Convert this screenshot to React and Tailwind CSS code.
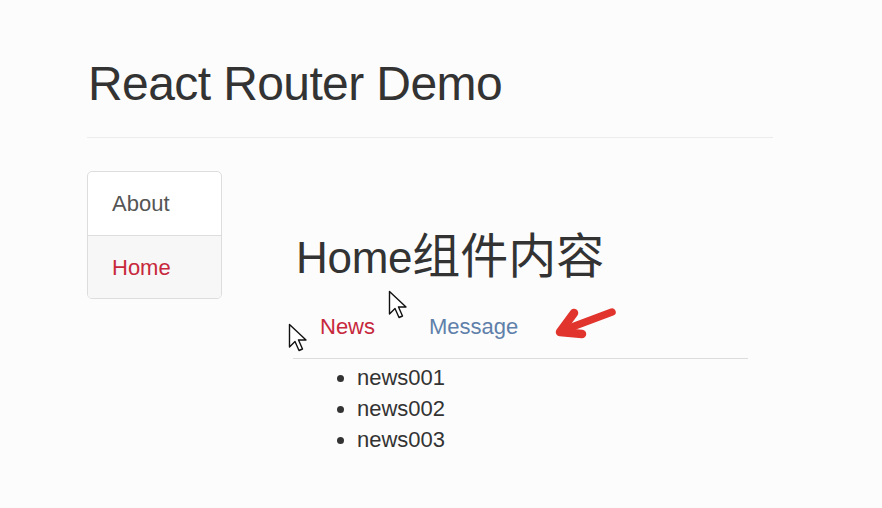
import React from "react";

function Cursor({ className }) {
  return (
    <svg className={className} width="20" height="30" viewBox="0 0 20 30" fill="none">
      <path
        d="M1.5 1.5 L1.5 24 L7 18.5 L11 27.5 L14.5 26 L10.5 17 L18 17 Z"
        fill="#ffffff"
        stroke="#111111"
        strokeWidth="1.4"
        strokeLinejoin="round"
      />
    </svg>
  );
}

function RedArrow({ className }) {
  return (
    <svg className={className} width="70" height="44" viewBox="0 0 70 44" fill="none">
      <path d="M62 12 L14 30" stroke="#e0342c" strokeWidth="7.5" strokeLinecap="round" />
      <path
        d="M24 13 L10 32 L32 34"
        stroke="#e0342c"
        strokeWidth="8.5"
        strokeLinecap="round"
        strokeLinejoin="round"
      />
    </svg>
  );
}

export default function App() {
  return (
    <div
      className="relative w-[882px] h-[508px] overflow-hidden bg-[#fcfcfc] text-[#333333]"
      style={{ fontFamily: "'Liberation Sans', 'Noto Sans CJK SC', sans-serif" }}
    >
      <div className="ml-[87px] w-[686px]">
        <div className="pt-[60px] pb-[29px] border-b border-[#ececec]">
          <h1 className="text-[48px] leading-[48px] tracking-[-0.6px] pl-[1px] m-0">React Router Demo</h1>
        </div>

        <div className="flex mt-[33px]">
          <div className="w-[135px] h-[128px] flex flex-col border border-[#dddddd] rounded-[5px] overflow-hidden bg-white">
            <div className="h-[64px] flex items-center pl-[24px] border-b border-[#dddddd] text-[22px] text-[#555555]">
              About
            </div>
            <div className="flex-1 flex items-center pl-[24px] bg-[#f7f7f7] text-[22px] text-[#c7283c]">
              Home
            </div>
          </div>

          <div className="ml-[71px] w-[455px] pt-[64px]">
            <h2 className="h-[44px] text-[44px] leading-[44px] pl-[3px] m-0 tracking-[-0.3px] whitespace-nowrap">
              Home<span className="text-[48px] tracking-[0px]">组件内容</span>
            </h2>
            <ul className="flex mt-[37px] pb-[20px] border-b border-[#dcdcdc] text-[22px] leading-[22px]">
              <li className="px-[27px] text-[#c7283c]">News</li>
              <li className="px-[27px] text-[#5f80aa]">Message</li>
            </ul>
            <ul className="list-disc pl-[64px] mt-[3px] text-[22px] leading-[31px]">
              <li>news001</li>
              <li>news002</li>
              <li>news003</li>
            </ul>
          </div>
        </div>
      </div>

      <Cursor className="absolute left-[388px] top-[290px]" />
      <Cursor className="absolute left-[288px] top-[323px]" />
      <RedArrow className="absolute left-[550px] top-[300px]" />
    </div>
  );
}
